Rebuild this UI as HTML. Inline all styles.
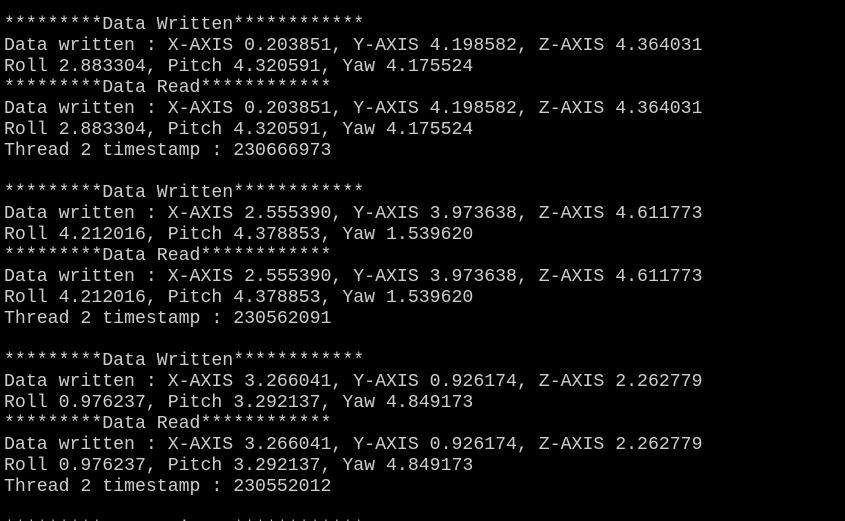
<!DOCTYPE html>
<html><head><style>
html,body{margin:0;padding:0;background:#000;width:845px;height:521px;overflow:hidden}
pre{margin:0;padding:15px 0 0 4px;font-family:"Liberation Mono",monospace;font-size:18.2px;line-height:21px;color:#cccccc;white-space:pre}
</style></head><body><pre>*********Data Written************
Data written : X-AXIS 0.203851, Y-AXIS 4.198582, Z-AXIS 4.364031
Roll 2.883304, Pitch 4.320591, Yaw 4.175524
*********Data Read************
Data written : X-AXIS 0.203851, Y-AXIS 4.198582, Z-AXIS 4.364031
Roll 2.883304, Pitch 4.320591, Yaw 4.175524
Thread 2 timestamp : 230666973

*********Data Written************
Data written : X-AXIS 2.555390, Y-AXIS 3.973638, Z-AXIS 4.611773
Roll 4.212016, Pitch 4.378853, Yaw 1.539620
*********Data Read************
Data written : X-AXIS 2.555390, Y-AXIS 3.973638, Z-AXIS 4.611773
Roll 4.212016, Pitch 4.378853, Yaw 1.539620
Thread 2 timestamp : 230562091

*********Data Written************
Data written : X-AXIS 3.266041, Y-AXIS 0.926174, Z-AXIS 2.262779
Roll 0.976237, Pitch 3.292137, Yaw 4.849173
*********Data Read************
Data written : X-AXIS 3.266041, Y-AXIS 0.926174, Z-AXIS 2.262779
Roll 0.976237, Pitch 3.292137, Yaw 4.849173
Thread 2 timestamp : 230552012

*********Data Written************
</pre></body></html>
